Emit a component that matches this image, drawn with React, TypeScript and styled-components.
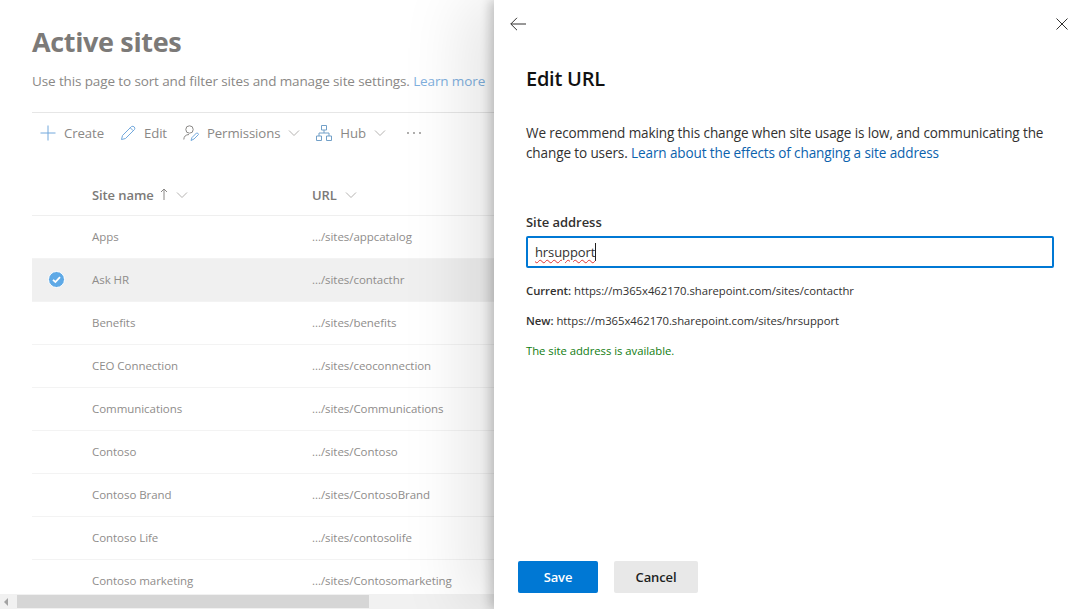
import React from 'react';
import styled, { createGlobalStyle } from 'styled-components';

const GlobalStyle = createGlobalStyle`
  html, body {
    margin: 0;
    padding: 0;
    height: 100%;
    overflow: hidden;
    background: #fff;
    font-family: "Open Sans", "Noto Sans", "Liberation Sans", sans-serif;
  }
`;

const sites = [
  { name: 'Apps', url: '.../sites/appcatalog' },
  { name: 'Ask HR', url: '.../sites/contacthr', selected: true },
  { name: 'Benefits', url: '.../sites/benefits' },
  { name: 'CEO Connection', url: '.../sites/ceoconnection' },
  { name: 'Communications', url: '.../sites/Communications' },
  { name: 'Contoso', url: '.../sites/Contoso' },
  { name: 'Contoso Brand', url: '.../sites/ContosoBrand' },
  { name: 'Contoso Life', url: '.../sites/contosolife' },
  { name: 'Contoso marketing', url: '.../sites/Contosomarketing' },
];

const Screen = styled.div`
  position: relative;
  width: 1086px;
  height: 609px;
  overflow: hidden;
`;

const Page = styled.main`
  display: flex;
  flex-direction: column;
  height: 594px;
  padding-left: 32px;
  overflow: hidden;
  box-sizing: border-box;
`;

const Title = styled.h1`
  margin: 23px 0 0;
  font-size: 27px;
  line-height: 37px;
  font-weight: 700;
  letter-spacing: -0.35px;
  color: #7c7a78;
  flex-shrink: 0;
`;

const Intro = styled.p`
  margin: 11px 0 0;
  font-size: 13.5px;
  line-height: 20px;
  letter-spacing: -0.12px;
  white-space: nowrap;
  color: #8a8886;
  flex-shrink: 0;
`;

const IntroLink = styled.span`
  color: #7fb0de;
`;

const Toolbar = styled.div`
  display: flex;
  align-items: center;
  flex-shrink: 0;
  height: 40px;
  margin-top: 21px;
  padding-left: 8px;
  border-top: 1px solid #e6e6e6;
`;

const ToolButton = styled.div`
  display: flex;
  align-items: center;
  margin-right: 16px;
  font-size: 13.2px;
  letter-spacing: -0.1px;
  color: #8a8886;
  white-space: nowrap;
`;

const MoreButton = styled(ToolButton)`
  margin-left: 4px;
`;

const ToolIcon = styled.svg`
  width: 16px;
  height: 16px;
  margin-right: 8px;
  fill: none;
  stroke: #72a8dc;
  stroke-width: 1;
`;

const Chevron = styled.svg`
  width: 12px;
  height: 12px;
  margin-left: 8px;
  fill: none;
  stroke: #b5b3b1;
  stroke-width: 1;
`;

const HeaderRow = styled.div`
  display: flex;
  align-items: center;
  flex-shrink: 0;
  height: 41px;
  margin-top: 21px;
  width: 462px;
  border-bottom: 1px solid #efefef;
  font-size: 13px;
  letter-spacing: -0.1px;
  font-weight: 600;
  color: #7c7a78;
`;

const Row = styled.div<{ $selected?: boolean }>`
  display: flex;
  align-items: center;
  flex-shrink: 0;
  height: 41px;
  padding-bottom: 1px;
  width: 462px;
  border-bottom: 1px solid #f3f3f3;
  font-size: 11.5px;
  letter-spacing: -0.05px;
  color: #8f8d8b;
  background: ${({ $selected }) => ($selected ? '#f0f0f0' : 'transparent')};
`;

const CheckCell = styled.div`
  display: flex;
  justify-content: center;
  width: 48px;
  margin-right: 12px;
`;

const NameCell = styled.div`
  display: flex;
  align-items: center;
  width: 220px;
  white-space: nowrap;
`;

const UrlCell = styled.div`
  display: flex;
  align-items: center;
  white-space: nowrap;
`;

const SortArrow = styled.svg`
  margin-left: 6px;
  fill: none;
  stroke: #8a8886;
`;

const Scrollbar = styled.div`
  position: absolute;
  left: 0;
  right: 0;
  bottom: 0;
  display: flex;
  align-items: center;
  height: 15px;
  background: #f1f1f1;
`;

const ScrollArrow = styled.div`
  width: 0;
  height: 0;
  margin: 0 8px 0 4px;
  border-style: solid;
  border-width: 4px 4px 4px 0;
  border-color: transparent #a3a3a3 transparent transparent;
`;

const ScrollThumb = styled.div`
  width: 352px;
  height: 13px;
  margin-left: 1px;
  background: #d6d6d6;
`;

const Panel = styled.aside`
  position: absolute;
  top: 0;
  left: 494px;
  right: 0;
  bottom: 0;
  display: flex;
  flex-direction: column;
  background: #fff;
  box-shadow: -4px 0 10px rgba(0, 0, 0, 0.2), -30px 0 60px rgba(0, 0, 0, 0.1);
  color: #201f1e;
`;

const PanelTop = styled.div`
  display: flex;
  align-items: center;
  justify-content: space-between;
  height: 48px;
  padding: 0 18px 0 16px;
`;

const PanelIcon = styled.svg`
  display: block;
  fill: none;
  stroke: #323130;
  stroke-width: 1;
`;

const PanelBody = styled.div`
  flex: 1;
  padding: 0 32px;
`;

const PanelTitle = styled.h2`
  margin: 17px 0 0;
  font-size: 20px;
  line-height: 28px;
  font-weight: 600;
  letter-spacing: -0.25px;
  color: #111;
`;

const Note = styled.p`
  margin: 30px 0 0;
  width: 530px;
  font-size: 13.55px;
  line-height: 20px;
  letter-spacing: -0.12px;
  color: #323130;
`;

const NoteLink = styled.span`
  color: #0b62ad;
`;

const FieldLabel = styled.div`
  margin-top: 49px;
  font-size: 13px;
  line-height: 20px;
  font-weight: 600;
  letter-spacing: -0.05px;
  color: #323130;
`;

const Field = styled.div`
  display: flex;
  align-items: center;
  height: 32px;
  margin-top: 4px;
  padding: 0 7px;
  border: 2px solid #0078d4;
  border-radius: 2px;
  box-sizing: border-box;
  font-size: 13px;
  letter-spacing: -0.1px;
  color: #323130;
`;

const FieldText = styled.span`
  text-decoration: underline wavy #e0322f 1px;
  text-underline-offset: 2px;
  border-right: 1px solid #201f1e;
  line-height: 18px;
`;

const InfoList = styled.div`
  display: flex;
  flex-direction: column;
  gap: 10px;
  margin-top: 13px;
`;

const Info = styled.div<{ $ok?: boolean }>`
  font-size: 11.3px;
  line-height: 20px;
  letter-spacing: -0.03px;
  color: ${({ $ok }) => ($ok ? '#107c10' : '#323130')};
  white-space: nowrap;
`;

const InfoKey = styled.span`
  font-weight: 600;
`;

const Actions = styled.div`
  display: flex;
  gap: 16px;
  padding: 0 0 16px 24px;
`;

const Button = styled.div<{ $primary?: boolean }>`
  display: flex;
  align-items: center;
  justify-content: center;
  height: 32px;
  width: ${({ $primary }) => ($primary ? 80 : 84)}px;
  border-radius: 2px;
  font-size: 13px;
  font-weight: 600;
  letter-spacing: -0.13px;
  background: ${({ $primary }) => ($primary ? '#0078d4' : '#e8e8e8')};
  color: ${({ $primary }) => ($primary ? '#fff' : '#201f1e')};
`;

const ChevronDown = () => (
  <Chevron viewBox="0 0 12 12">
    <path d="M1 3.5 6 8.5 11 3.5" />
  </Chevron>
);

const Check = () => (
  <svg width="17" height="17" viewBox="0 0 17 17">
    <circle cx="8.5" cy="8.5" r="8" fill="#5ea9e6" stroke="#fff" strokeWidth="1" />
    <path d="M5 8.8 7.4 11 12 6.2" fill="none" stroke="#fff" strokeWidth="1.8" />
  </svg>
);

export default function App() {
  return (
    <>
      <GlobalStyle />
      <Screen>
        <Page>
          <Title>Active sites</Title>
          <Intro>
            Use this page to sort and filter sites and manage site settings. <IntroLink>Learn more</IntroLink>
          </Intro>
          <Toolbar>
            <ToolButton>
              <ToolIcon viewBox="0 0 16 16">
                <path d="M8 0.5V15.5M0.5 8H15.5" />
              </ToolIcon>
              Create
            </ToolButton>
            <ToolButton>
              <ToolIcon viewBox="0 0 16 16">
                <path d="M1.5 14.5 2.5 10.5 11.5 1.5Q13 0.8 14.3 2 15.3 3.2 14.5 4.5L5.5 13.5Z M10.3 2.8 13.2 5.7" />
              </ToolIcon>
              Edit
            </ToolButton>
            <ToolButton>
              <ToolIcon viewBox="0 0 16 16">
                <circle cx="6.5" cy="4.5" r="3.7" stroke="#8a8886" />
                <path d="M0.8 14.5Q1 9.8 6 9.5" stroke="#8a8886" />
                <path d="M8 15.5 9 12.5 13.5 8Q15 7.6 15.5 9.5L11 14Z" />
              </ToolIcon>
              Permissions
              <ChevronDown />
            </ToolButton>
            <ToolButton>
              <ToolIcon viewBox="0 0 16 16">
                <path d="M5.5 0.5H10.5V5H5.5Z M0.5 11H5.5V15.5H0.5Z M10.5 11H15.5V15.5H10.5Z M8 5V8M3 11V8H13V11" stroke="#72a0c8" />
              </ToolIcon>
              Hub
              <ChevronDown />
            </ToolButton>
            <MoreButton>
              <svg width="16" height="4" viewBox="0 0 16 4">
                <circle cx="2" cy="2" r="0.9" fill="#8a8886" />
                <circle cx="8" cy="2" r="0.9" fill="#8a8886" />
                <circle cx="14" cy="2" r="0.9" fill="#8a8886" />
              </svg>
            </MoreButton>
          </Toolbar>
          <HeaderRow>
            <CheckCell />
            <NameCell>
              Site name
              <SortArrow width="8" height="13" viewBox="0 0 8 13">
                <path d="M4 1V12M1 4 4 1 7 4" />
              </SortArrow>
              <ChevronDown />
            </NameCell>
            <UrlCell>
              URL
              <ChevronDown />
            </UrlCell>
          </HeaderRow>
          {sites.map((site) => (
            <Row key={site.name} $selected={site.selected}>
              <CheckCell>{site.selected && <Check />}</CheckCell>
              <NameCell>{site.name}</NameCell>
              <UrlCell>{site.url}</UrlCell>
            </Row>
          ))}
        </Page>
        <Scrollbar>
          <ScrollArrow />
          <ScrollThumb />
        </Scrollbar>
        <Panel>
          <PanelTop>
            <PanelIcon width="16" height="14" viewBox="0 0 16 14">
              <path d="M16 7H0.8M7 0.8 0.8 7 7 13.2" />
            </PanelIcon>
            <PanelIcon width="12" height="12" viewBox="0 0 12 12">
              <path d="M0.5 0.5 11.5 11.5M11.5 0.5 0.5 11.5" />
            </PanelIcon>
          </PanelTop>
          <PanelBody>
            <PanelTitle>Edit URL</PanelTitle>
            <Note>
              We recommend making this change when site usage is low, and communicating the change to users.{' '}
              <NoteLink>Learn about the effects of changing a site address</NoteLink>
            </Note>
            <FieldLabel>Site address</FieldLabel>
            <Field>
              <FieldText>hrsupport</FieldText>
            </Field>
            <InfoList>
              <Info>
                <InfoKey>Current:</InfoKey> https://m365x462170.sharepoint.com/sites/contacthr
              </Info>
              <Info>
                <InfoKey>New:</InfoKey> https://m365x462170.sharepoint.com/sites/hrsupport
              </Info>
              <Info $ok>The site address is available.</Info>
            </InfoList>
          </PanelBody>
          <Actions>
            <Button $primary>Save</Button>
            <Button>Cancel</Button>
          </Actions>
        </Panel>
      </Screen>
    </>
  );
}
